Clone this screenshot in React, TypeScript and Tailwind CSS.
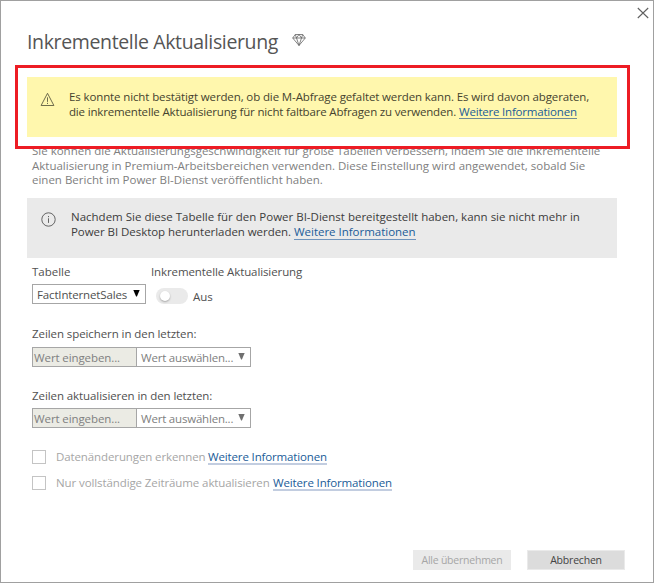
import { useState } from 'react';
import type { ReactNode } from 'react';

function DiamondIcon() {
  return (
    <svg className="h-[14px] w-[14px]" viewBox="0 0 14 14" fill="none" stroke="#5c5c5c" strokeWidth="0.75" strokeLinejoin="round">
      <path d="M3.3 1.5h7.4L13.3 5 7 12.5.7 5zM.7 5h12.6M3.3 1.5 4.5 5 7 12.5 9.5 5l1.2-3.5M4.5 5 7 1.5 9.5 5" />
    </svg>
  );
}

function WarningIcon() {
  return (
    <svg className="h-[15px] w-[15px] shrink-0" viewBox="0 0 15 15" fill="none" stroke="#5f5c42" strokeWidth="0.9">
      <path d="M7.5 1.3 13.9 13.5H1.1z" />
      <path d="M7.5 5.3v4.6M7.5 10.8v1.2" />
    </svg>
  );
}

function InfoIcon() {
  return (
    <svg className="h-[15px] w-[15px] shrink-0" viewBox="0 0 15 15" fill="none" stroke="#555" strokeWidth="0.9">
      <circle cx="7.5" cy="7.5" r="6.7" />
      <path d="M7.5 6.3v4.6M7.5 4v1.2" />
    </svg>
  );
}

function Arrow({ className }: { className: string }) {
  return (
    <svg className={`h-[7px] w-[7px] shrink-0 ${className}`} viewBox="0 0 7 7" fill="currentColor">
      <path d="M.3 0h6.4L3.9 6.6h-.8z" />
    </svg>
  );
}

function MoreLink({ className }: { className: string }) {
  return (
    <a href="#" className={`inline-block text-[#215c98] ${className}`}>
      Weitere Informationen
    </a>
  );
}

function PeriodRow({ label, className, fieldClassName }: { label: string; className: string; fieldClassName: string }) {
  return (
    <div className={className}>
      <div className="h-[15px] tracking-[-0.08px] text-[#505050]">{label}</div>
      <div className={`flex h-5 w-[219px] text-[#808080] ${fieldClassName}`}>
        <div className="w-[105px] border border-[#a6a6a6] bg-[#ebebe4] pt-[2px] pl-px tracking-[-0.1px]">Wert eingeben...</div>
        <div className="flex w-[114px] border border-l-0 border-[#a6a6a6] pt-[2px] pl-1">
          <span className="w-[97px] tracking-[-0.2px]">Wert auswählen...</span>
          <Arrow className="mt-[3px] text-[#6f6f6f]" />
        </div>
      </div>
    </div>
  );
}

function CheckRow({ children, className }: { children: ReactNode; className: string }) {
  return (
    <div className={`flex h-[18px] ${className}`}>
      <div className="mt-px h-[14px] w-[14px] border border-[#c4c4c4]" />
      <div className="ml-[10px] flex">{children}</div>
    </div>
  );
}

export default function App() {
  const [on, setOn] = useState(false);
  return (
    <div className="relative h-[583px] w-[654px] overflow-hidden border border-[#a0a0a0] bg-white font-['Open_Sans',sans-serif] text-[11.5px] leading-[15px] whitespace-nowrap">
      <header className="flex h-[76px] justify-between pl-[26px]">
        <div className="flex">
          <h1 className="mt-[27px] w-[252px] text-[19.5px] leading-7 tracking-[-0.36px] text-[#555]">Inkrementelle Aktualisierung</h1>
          <div className="mt-8 ml-[13px]">
            <DiamondIcon />
          </div>
        </div>
        <button aria-label="Schließen" className="mt-[6px] mr-[4px] h-3 w-3">
          <svg className="h-3 w-3" viewBox="0 0 12 12" stroke="#606060" strokeWidth="1.1">
            <path d="M.8 1l10.4 10M11.2 1 .8 11" />
          </svg>
        </button>
      </header>

      <section className="ml-[26px] flex h-[60px] w-[590px] bg-[#fff7ad] pl-[13px] text-[#45432f]">
        <div className="mt-[15px]">
          <WarningIcon />
        </div>
        <div className="mt-3 ml-[14px]">
          <p className="tracking-[-0.12px]">Es konnte nicht bestätigt werden, ob die M-Abfrage gefaltet werden kann. Es wird davon abgeraten,</p>
          <p className="flex">
            <span className="w-[390px] tracking-[-0.168px]">die inkrementelle Aktualisierung für nicht faltbare Abfragen zu verwenden.</span>
            <MoreLink className="h-[15px] w-[118px] border-b border-[#6f8a97] tracking-[-0.2px]" />
          </p>
        </div>
      </section>

      <div className="mt-[7px] ml-[31px] h-[54px] leading-[14.5px] text-[#808080]">
        <p>Sie können die Aktualisierungsgeschwindigkeit für große Tabellen verbessern, indem Sie die inkrementelle</p>
        <p>Aktualisierung in Premium-Arbeitsbereichen verwenden. Diese Einstellung wird angewendet, sobald Sie</p>
        <p>einen Bericht im Power BI-Dienst veröffentlicht haben.</p>
      </div>

      <section className="ml-[26px] flex h-[60px] w-[590px] bg-[#eaeaea] pl-[14px] text-[#3c3c3c]">
        <div className="mt-[14px]">
          <InfoIcon />
        </div>
        <div className="mt-[11px] ml-[15px]">
          <p>Nachdem Sie diese Tabelle für den Power BI-Dienst bereitgestellt haben, kann sie nicht mehr in</p>
          <p className="flex">
            <span className="w-[223px] tracking-[-0.05px]">Power BI Desktop herunterladen werden.</span>
            <MoreLink className="h-4 w-[122px] border-b border-[#6f94bd] tracking-[-0.02px]" />
          </p>
        </div>
      </section>

      <div className="ml-[31px] flex pt-[6px] text-[#505050]">
        <div className="h-10 w-[119px]">
          <div>Tabelle</div>
          <div className="mt-[5px] flex h-5 w-[114px] border border-[#a6a6a6] pt-[2px] pl-1">
            <span className="w-[95.5px] tracking-[-0.15px]">FactInternetSales</span>
            <Arrow className="mt-[3px] text-black" />
          </div>
        </div>
        <div>
          <div className="tracking-[-0.1px]">Inkrementelle Aktualisierung</div>
          <div className="mt-[9px] flex">
            <button role="switch" aria-checked={on} onClick={() => setOn(!on)} className="ml-[5px] flex h-4 w-8 items-center rounded-full bg-[#eaeaea] px-1">
              <span className="h-[10px] w-[10px] rounded-full bg-white shadow-[0_1px_2px_rgba(0,0,0,0.3)]" />
            </button>
            <span className="mt-px ml-[5px]">Aus</span>
          </div>
        </div>
      </div>

      <PeriodRow className="mt-[22px] ml-[31px]" fieldClassName="mt-[6px]" label="Zeilen speichern in den letzten:" />
      <PeriodRow className="mt-[21px] ml-[31px]" fieldClassName="mt-[5px]" label="Zeilen aktualisieren in den letzten:" />

      <CheckRow className="mt-[21px] ml-[31px] text-[#a6a6a6]">
        <span className="w-[152px] tracking-[-0.11px]">Datenänderungen erkennen</span>
        <MoreLink className="h-4 w-[119px] border-b-2 border-[#c2cde0] tracking-[-0.14px]" />
      </CheckRow>
      <CheckRow className="mt-2 ml-[31px] text-[#a6a6a6]">
        <span className="w-[217px] tracking-[-0.1px]">Nur vollständige Zeiträume aktualisieren</span>
        <MoreLink className="h-4 w-[119px] border-b-2 border-[#c2cde0] tracking-[-0.14px]" />
      </CheckRow>

      <footer className="mt-[57px] flex justify-end gap-4 pr-7 text-[10.5px]">
        <button disabled className="h-5 w-[98px] bg-[#eaeaea] tracking-[-0.23px] text-[#a6a6a6]">Alle übernehmen</button>
        <button className="h-5 w-[98px] border border-[#eaeaea] bg-[#dcdcdc] tracking-[-0.2px] text-[#444]">Abbrechen</button>
      </footer>

      <div className="pointer-events-none absolute top-16 left-[14px] h-[84px] w-[615px] border-[3px] border-[#ed1c24]" />
    </div>
  );
}
